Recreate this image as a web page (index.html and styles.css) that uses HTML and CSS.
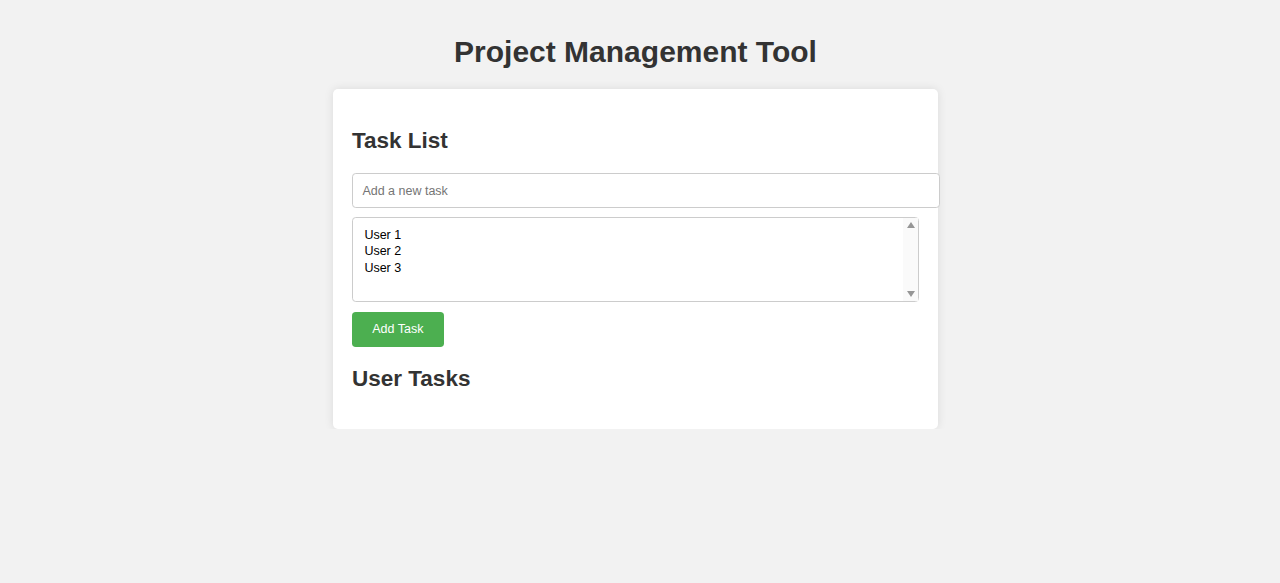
FILE: index.html
```html
<!DOCTYPE html>
<html lang="en">
<head>
<meta charset="utf-8">
<title>Project Management Tool</title>
<link rel="stylesheet" href="styles.css">
</head>
<body>
<h1 class="title">Project Management Tool</h1>
<div class="container">
  <h2 class="section-title">Task List</h2>
  <input class="task-input" type="text" placeholder="Add a new task">
  <div class="select-wrap">
    <select class="user-select" multiple>
      <option>User 1</option>
      <option>User 2</option>
      <option>User 3</option>
    </select>
    <span class="fake-scroll" aria-hidden="true">
      <span class="arrow-up"></span>
      <span class="arrow-down"></span>
    </span>
  </div>
  <button class="add-btn">Add Task</button>
  <h2 class="section-title tasks-title">User Tasks</h2>
</div>
</body>
</html>
```

FILE: styles.css
```css
html, body {
  margin: 0;
  padding: 0;
}
body {
  background: #f2f2f2;
  font-family: "Liberation Sans", Arial, sans-serif;
  color: #333;
  padding: 15px 9px 0 0;
}
.title {
  text-align: center;
  font-size: 30px;
  font-weight: bold;
  margin: 20.1px 0;
  color: #333;
}
.container {
  width: 567px;
  margin: 0 auto;
  background: #fff;
  padding: 19.75px 18.75px 17.75px;
  border-radius: 5px;
  box-shadow: 0 0 9.4px rgba(0, 0, 0, 0.1);
}
.section-title {
  font-size: 22.5px;
  font-weight: bold;
  margin: 18.7px 0 19.7px;
  color: #333;
}
.tasks-title {
  margin: 19.7px 0 18.7px;
}
.task-input {
  display: block;
  width: 100%;
  box-sizing: content-box;
  padding: 9.4px;
  border: 0.94px solid #ccc;
  border-radius: 3.75px;
  font-family: "Liberation Sans", Arial, sans-serif;
  font-size: 12.5px;
  margin: 0 0 9.4px 0;
  outline: none;
}
.task-input::placeholder {
  color: #757575;
}
.select-wrap {
  position: relative;
  margin: 0 0 9.4px 0;
}
.user-select {
  display: block;
  width: 100%;
  box-sizing: border-box;
  height: 85px;
  padding: 9.4px;
  border: 0.94px solid #ccc;
  border-radius: 3.75px;
  font-family: "Liberation Sans", Arial, sans-serif;
  font-size: 12.5px;
  color: #000;
  margin: 0;
  overflow: hidden;
  outline: none;
}
.user-select option {
  padding: 0 2px 1.6px;
}
.fake-scroll {
  position: absolute;
  top: 1px;
  right: 1px;
  bottom: 1px;
  width: 15px;
  background: #fafafa;
  pointer-events: none;
}
.arrow-up,
.arrow-down {
  position: absolute;
  left: 3.5px;
  width: 0;
  height: 0;
  border-left: 4px solid transparent;
  border-right: 4px solid transparent;
}
.arrow-up {
  top: 4px;
  border-bottom: 6px solid #969696;
}
.arrow-down {
  bottom: 4px;
  border-top: 6px solid #969696;
}
.add-btn {
  display: block;
  background: #4caf50;
  color: #fff;
  border: none;
  border-radius: 3.75px;
  padding: 10.4px 20.25px;
  font-family: "Liberation Sans", Arial, sans-serif;
  font-size: 12.5px;
  cursor: pointer;
}
```
